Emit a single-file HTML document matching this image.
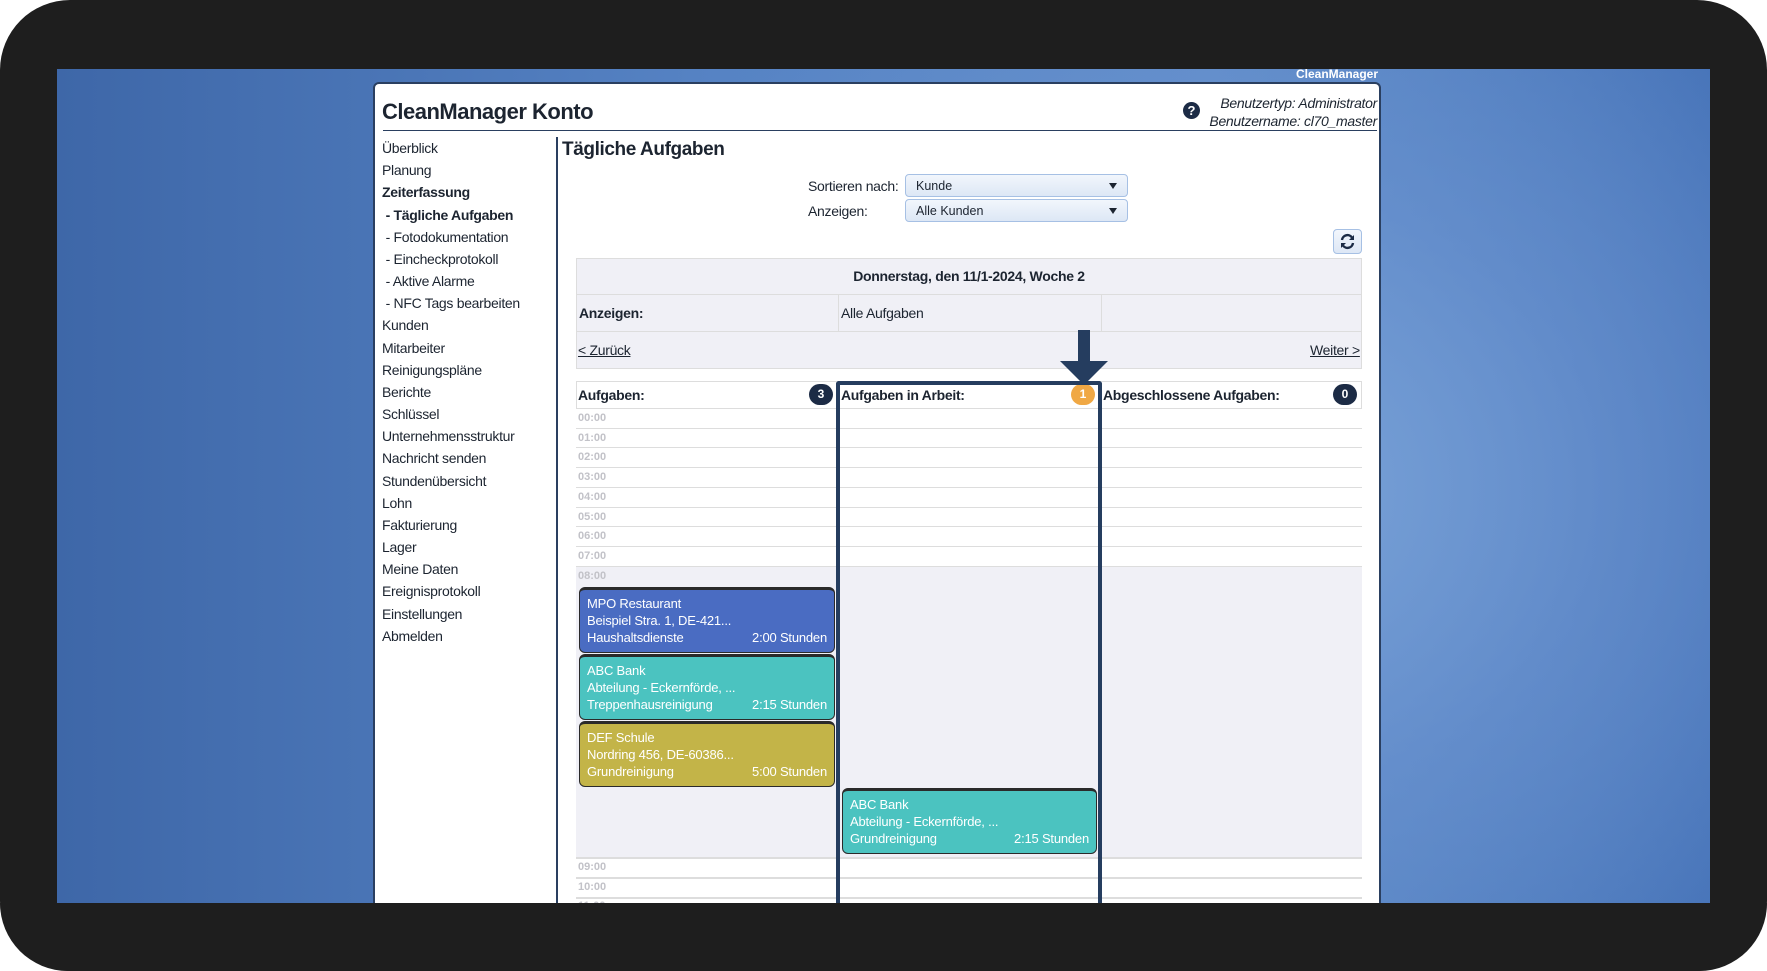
<!DOCTYPE html>
<html><head><meta charset="utf-8"><style>
*{margin:0;padding:0;box-sizing:border-box}
body{width:1767px;height:971px;background:#fff;overflow:hidden;font-family:"Liberation Sans",sans-serif;position:relative}
.frame{position:absolute;left:0;top:0;width:1767px;height:971px;background:#1e1e1e;border-radius:70px}
.bg{position:absolute;left:57px;top:69px;width:1653px;height:834px;overflow:hidden;
background:radial-gradient(ellipse 700px 600px at 1200px 420px,#7aa3d8 0%,rgba(110,150,210,0.6) 50%,rgba(0,0,0,0) 100%),linear-gradient(90deg,#3e67a8 0%,#5683c4 40%,#5e8bc8 70%,#4673b8 100%)}
.a{position:absolute}
.panel{position:absolute;left:373px;top:82px;width:1008px;height:830px;background:#fff;border:2px solid #2a3f60;border-bottom:none;border-radius:6px 6px 0 0}
.nav div{position:absolute;left:382px;font-size:14px;letter-spacing:-0.3px;color:#1c2430;white-space:nowrap}
.sel{position:absolute;left:905px;width:223px;height:23px;border:1px solid #a6c0e4;border-radius:4px;background:linear-gradient(#f2f6fc,#dde7f5);font-size:12.5px;color:#1c2430;padding:4px 0 0 10px}
.sel:after{content:"";position:absolute;right:10px;top:8px;border-left:4px solid transparent;border-right:4px solid transparent;border-top:6px solid #1c2430}
.cell{position:absolute;background:#f0f0f6;border:1px solid #ddd;font-size:14px;color:#1c2430;letter-spacing:-0.3px}
.row{position:absolute;left:576px;width:786px;border-top:1px solid #ddd;background:#fff}
.hl{position:absolute;left:578px;font-size:11px;color:#c2c2c8;font-weight:bold}
.card{position:absolute;border:1px solid #2a2a2a;border-top:3px solid #2a2a2a;border-radius:6px;color:#fff;font-size:13px;letter-spacing:-0.2px;line-height:17px;padding:5px 7px 0 7px}
.card .l{display:flex;justify-content:space-between}
.badge{position:absolute;width:24px;height:21px;border-radius:11px;background:#1c2b45;color:#fff;font-size:12px;font-weight:bold;text-align:center;line-height:21px}
</style></head><body>
<div class="frame"></div>
<div class="bg"></div>
<div class="a" style="left:1296px;top:67px;font-size:12px;font-weight:bold;color:#fff">CleanManager</div>
<div class="panel"></div>
<div class="a" style="left:382px;top:99px;font-size:22px;font-weight:bold;color:#1c2430;letter-spacing:-0.5px">CleanManager Konto</div>
<div class="a" style="left:383px;top:130px;width:994px;height:1px;background:#2a3f60"></div>
<div class="a" style="left:1183px;top:102px;width:17px;height:17px;border-radius:50%;background:#1c2b45;color:#fff;font-size:13px;font-weight:bold;text-align:center;line-height:17px">?</div>
<div class="a" style="right:390px;top:94px;font-size:14px;font-style:italic;color:#1c2430;text-align:right;line-height:18px;letter-spacing:-0.3px">Benutzertyp: Administrator<br>Benutzername: cl70_master</div>
<div class="nav">
<div style="top:140px">Überblick</div>
<div style="top:162px">Planung</div>
<div style="top:184px;font-weight:bold">Zeiterfassung</div>
<div style="top:207px;font-weight:bold">&nbsp;- Tägliche Aufgaben</div>
<div style="top:229px">&nbsp;- Fotodokumentation</div>
<div style="top:251px">&nbsp;- Eincheckprotokoll</div>
<div style="top:273px">&nbsp;- Aktive Alarme</div>
<div style="top:295px">&nbsp;- NFC Tags bearbeiten</div>
<div style="top:317px">Kunden</div>
<div style="top:340px">Mitarbeiter</div>
<div style="top:362px">Reinigungspläne</div>
<div style="top:384px">Berichte</div>
<div style="top:406px">Schlüssel</div>
<div style="top:428px">Unternehmensstruktur</div>
<div style="top:450px">Nachricht senden</div>
<div style="top:473px">Stundenübersicht</div>
<div style="top:495px">Lohn</div>
<div style="top:517px">Fakturierung</div>
<div style="top:539px">Lager</div>
<div style="top:561px">Meine Daten</div>
<div style="top:583px">Ereignisprotokoll</div>
<div style="top:606px">Einstellungen</div>
<div style="top:628px">Abmelden</div>
</div>
<div class="a" style="left:556px;top:137px;width:2px;height:770px;background:#2a3f60"></div>
<div class="a" style="left:562px;top:139px;font-size:19px;font-weight:bold;color:#1c2430;letter-spacing:-0.4px">Tägliche Aufgaben</div>
<div class="a" style="left:808px;top:178px;font-size:14px;color:#1c2430;letter-spacing:-0.3px">Sortieren nach:</div>
<div class="a" style="left:808px;top:203px;font-size:14px;color:#1c2430;letter-spacing:-0.3px">Anzeigen:</div>
<div class="sel" style="top:174px">Kunde</div>
<div class="sel" style="top:199px">Alle Kunden</div>
<div class="a" style="left:1333px;top:229px;width:29px;height:25px;border:1px solid #a6c0e4;border-radius:4px;background:linear-gradient(#f2f6fc,#dde7f5)">
<svg width="27" height="23" viewBox="0 0 27 23"><g fill="none" stroke="#1c2b45" stroke-width="2.4"><path d="M8 10a5.5 5.5 0 0 1 10-2.5"/><path d="M19 13a5.5 5.5 0 0 1-10 2.5"/></g><path d="M20 5v5h-5z" fill="#1c2b45"/><path d="M7 18v-5h5z" fill="#1c2b45"/></svg></div>
<div class="cell" style="left:576px;top:258px;width:786px;height:37px;text-align:center;font-weight:bold;line-height:34px">Donnerstag, den 11/1-2024, Woche 2</div>
<div class="cell" style="left:576px;top:294px;width:263px;height:38px;font-weight:bold;padding:10px 0 0 2px">Anzeigen:</div>
<div class="cell" style="left:838px;top:294px;width:264px;height:38px;padding:10px 0 0 2px">Alle Aufgaben</div>
<div class="cell" style="left:1101px;top:294px;width:261px;height:38px"></div>
<div class="cell" style="left:576px;top:331px;width:786px;height:38px"></div>
<div class="a" style="left:578px;top:342px;font-size:14px;color:#1c2430;text-decoration:underline;letter-spacing:-0.3px">&lt; Zurück</div>
<div class="a" style="left:1310px;top:342px;font-size:14px;color:#1c2430;text-decoration:underline;letter-spacing:-0.3px">Weiter &gt;</div>
<div class="a" style="left:576px;top:381px;width:786px;height:530px;border:1px solid #ddd;background:#fff"></div>
<div class="a" style="left:578px;top:387px;font-size:14px;font-weight:bold;color:#1c2430;letter-spacing:-0.3px">Aufgaben:</div>
<div class="a" style="left:841px;top:387px;font-size:14px;font-weight:bold;color:#1c2430;letter-spacing:-0.3px">Aufgaben in Arbeit:</div>
<div class="a" style="left:1103px;top:387px;font-size:14px;font-weight:bold;color:#1c2430;letter-spacing:-0.3px">Abgeschlossene Aufgaben:</div>
<div class="badge" style="left:809px;top:384px">3</div>
<div class="badge" style="left:1071px;top:384px;background:#f0a844">1</div>
<div class="badge" style="left:1333px;top:384px">0</div>
<div class="row" style="top:408px;height:20px"></div><div class="hl" style="top:412px">00:00</div>
<div class="row" style="top:428px;height:20px"></div><div class="hl" style="top:432px">01:00</div>
<div class="row" style="top:447px;height:20px"></div><div class="hl" style="top:451px">02:00</div>
<div class="row" style="top:467px;height:20px"></div><div class="hl" style="top:471px">03:00</div>
<div class="row" style="top:487px;height:20px"></div><div class="hl" style="top:491px">04:00</div>
<div class="row" style="top:507px;height:20px"></div><div class="hl" style="top:511px">05:00</div>
<div class="row" style="top:526px;height:20px"></div><div class="hl" style="top:530px">06:00</div>
<div class="row" style="top:546px;height:20px"></div><div class="hl" style="top:550px">07:00</div>
<div class="row" style="top:566px;height:291px;background:#f0f0f6"></div><div class="hl" style="top:570px">08:00</div>
<div class="row" style="top:857px;height:20px;border-top:2px solid #ddd"></div><div class="hl" style="top:861px">09:00</div>
<div class="row" style="top:877px;height:20px;border-top:2px solid #ddd"></div><div class="hl" style="top:881px">10:00</div>
<div class="row" style="top:897px;height:20px;border-top:2px solid #ddd"></div><div class="hl" style="top:900px">11:00</div>
<div class="card" style="left:579px;top:587px;width:256px;height:66px;background:#4a6cc2">MPO Restaurant<br>Beispiel Stra. 1, DE-421...<div class="l"><span>Haushaltsdienste</span><span>2:00 Stunden</span></div></div>
<div class="card" style="left:579px;top:654px;width:256px;height:66px;background:#4bc3c0">ABC Bank<br>Abteilung - Eckernförde, ...<div class="l"><span>Treppenhausreinigung</span><span>2:15 Stunden</span></div></div>
<div class="card" style="left:579px;top:721px;width:256px;height:66px;background:#c3b448">DEF Schule<br>Nordring 456, DE-60386...<div class="l"><span>Grundreinigung</span><span>5:00 Stunden</span></div></div>
<div class="card" style="left:842px;top:788px;width:255px;height:66px;background:#4bc3c0">ABC Bank<br>Abteilung - Eckernförde, ...<div class="l"><span>Grundreinigung</span><span>2:15 Stunden</span></div></div>
<div class="a" style="left:836px;top:381px;width:266px;height:540px;border:4px solid #253d5f;border-bottom:none;border-radius:3px 3px 0 0"></div>
<svg class="a" style="left:1058px;top:330px" width="52" height="56"><rect x="20" y="0" width="12" height="33" fill="#253d5f"/><path d="M2 31H50L26 55Z" fill="#253d5f"/></svg>
<div class="a" style="left:0;top:903px;width:1767px;height:68px;background:#1e1e1e;border-radius:0 0 70px 70px"></div>
</body></html>
